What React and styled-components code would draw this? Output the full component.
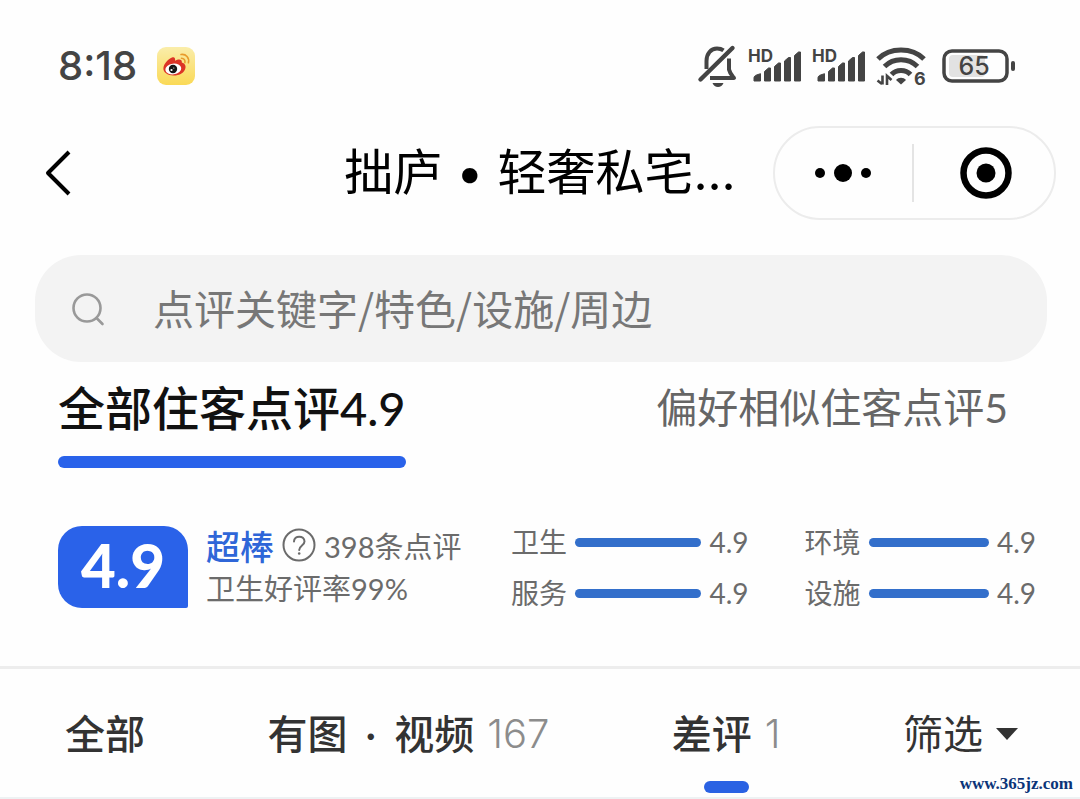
import React from "react";
import styled, { createGlobalStyle } from "styled-components";

const GlobalStyle = createGlobalStyle`
  *, *::before, *::after { box-sizing: border-box; }
  body {
    margin: 0;
    background: #fefefe;
    font-family: Lato, "Noto Sans CJK SC", sans-serif;
    color: #333;
  }
  button, input {
    font: inherit;
    color: inherit;
    border: 0;
    padding: 0;
    margin: 0;
    background: none;
  }
  button { cursor: pointer; }
  svg { display: block; flex: none; }
`;

const Page = styled.main`
  position: relative;
  overflow: hidden;
`;

const StatusBar = styled.div`
  display: flex;
  align-items: center;
  height: 126px;
  padding: 6px 64px 0 58px;
`;

const Clock = styled.time`
  font: 500 40px/48px Inter, sans-serif;
  color: #444;
  margin: 0 auto 0 0;
  display: flex;
  align-items: center;
  gap: 20px;
  height: 48px;
`;

const StatusIcons = styled.div`
  display: flex;
  align-items: center;
  gap: 10px;
`;

const NavBar = styled.header`
  display: grid;
  grid-template-columns: 1fr auto 1fr;
  align-items: center;
  padding: 0 24px 0 44px;
`;

const BackButton = styled.button`
  justify-self: start;
`;

const Title = styled.h1`
  margin: 0 0 0 -20px;
  font: 400 49px/72px Inter, "Noto Sans CJK SC", sans-serif;
  color: #000;
  white-space: nowrap;
`;

const Capsule = styled.div`
  justify-self: end;
  display: flex;
  align-items: center;
  width: 283px;
  height: 94px;
  border: 2px solid #ececec;
  border-radius: 47px;
`;

const CapsuleButton = styled.button`
  flex: 1;
  display: flex;
  justify-content: center;
  align-items: center;
  height: 58px;
  & + & {
    padding-left: 4px;
    border-left: 2px solid #e4e4e4;
  }
`;

const SearchBox = styled.label`
  display: flex;
  align-items: center;
  gap: 48px;
  height: 107px;
  margin: 35px 33px 0 35px;
  padding: 0 36px;
  border-radius: 46px;
  background: #f3f3f3;
`;

const SearchInput = styled.input`
  flex: 1;
  min-width: 0;
  height: 60px;
  margin-bottom: 4px;
  font-family: "Noto Sans CJK SC", sans-serif;
  font-size: 41px;
  outline: 0;
  &::placeholder { color: #777; opacity: 1; }
`;

const ReviewTabs = styled.div`
  display: flex;
  justify-content: space-between;
  align-items: flex-start;
  padding: 10px 72px 0 58px;
`;

const ReviewTab = styled.button`
  font-size: ${(p) => (p.$active ? 47 : 41)}px;
  line-height: 72px;
  font-weight: ${(p) => (p.$active ? 500 : 400)};
  color: ${(p) => (p.$active ? "#111" : "#666")};
  white-space: nowrap;
  &::after {
    content: "";
    display: block;
    height: 12px;
    margin-top: 12px;
    border-radius: 6px;
    background: ${(p) => (p.$active ? "#2962ea" : "transparent")};
  }
`;

const Summary = styled.section`
  display: flex;
  align-items: flex-start;
  height: 201px;
  padding: 58px 44px 0 58px;
  border-bottom: 3px solid #ededed;
`;

const ScoreBadge = styled.strong`
  flex: none;
  width: 130px;
  height: 82px;
  border-radius: 24px 24px 2px 24px;
  background: #2a62e9;
  color: #fff;
  font: 900 60px/78px Lato, sans-serif;
  text-align: center;
`;

const Verdict = styled.div`
  flex: none;
  margin: -2px 0 0 18px;
  width: 305px;
  font-size: 29px;
  color: #6b6b6b;
  white-space: nowrap;
`;

const VerdictLine = styled.div`
  display: flex;
  align-items: center;
  height: 42px;
  gap: 8px;
`;

const Grade = styled.b`
  font-size: 34px;
  font-weight: 500;
  color: #2f66d8;
`;

const Metrics = styled.dl`
  flex: 1;
  display: grid;
  grid-template-columns: 237fr 231fr;
  column-gap: 56px;
  row-gap: 10px;
  margin: -4px 0 0;
  font-size: 28px;
  line-height: 41px;
  color: #6b6b6b;
`;

const Metric = styled.div`
  display: flex;
  align-items: center;
  gap: 8px;
  dt, dd { margin: 0; white-space: nowrap; }
`;

const Track = styled.span`
  flex: 1;
  height: 9px;
  border-radius: 5px;
  background: #336fcb;
`;

const Filters = styled.nav`
  display: flex;
  justify-content: space-between;
  align-items: flex-start;
  height: 130px;
  padding: 18px 62px 0 65px;
  border-bottom: 2px solid #eef2f3;
`;

const FilterButton = styled.button`
  font-size: 40px;
  font-weight: ${(p) => (p.$light ? 400 : 500)};
  white-space: nowrap;
  &::after {
    content: "";
    display: ${(p) => (p.$active ? "block" : "none")};
    width: 45px;
    height: 12px;
    margin: 0 auto;
    border-radius: 6px;
    background: #2a62e3;
  }
`;

const FilterLabel = styled.span`
  display: flex;
  align-items: center;
  gap: 13px;
  height: 94px;
  line-height: 94px;
`;

const MiddleDot = styled.span`
  margin: 0 8px;
`;

const Count = styled.span`
  font-family: Inter, sans-serif;
  font-weight: 300;
  color: #8c8c8c;
`;

const Watermark = styled.span`
  position: absolute;
  right: 7px;
  bottom: 4px;
  font: 700 17px/22px "Liberation Serif", serif;
  color: #0b3478;
`;

const WeiboIcon = () => (
  <svg width="38" height="38" viewBox="0 0 38 38" aria-hidden="true">
    <defs>
      <linearGradient id="weiboTile" x1="0" y1="0" x2="0" y2="1">
        <stop offset="0" stopColor="#faedaa" />
        <stop offset="1" stopColor="#fad956" />
      </linearGradient>
    </defs>
    <rect width="38" height="38" rx="9" fill="url(#weiboTile)" />
    <path d="M15 10.500c2.200-.9 3.600.3 3 3.200 3.300-1.800 7.500-2 6.800 1.800 2.700.7 4.200 2.600 3.700 5.200-.8 5-6 7.800-11.800 7.800-6.500 0-10.500-3.200-10.300-7.200.2-4.300 4.500-9.200 8.600-10.800Z" fill="#dc3426" />
    <ellipse cx="16.300" cy="22" rx="8" ry="5.400" fill="#fff" transform="rotate(-7 16.300 22)" />
    <circle cx="16" cy="22" r="4.200" fill="#161616" />
    <circle cx="14.500" cy="23" r="1.100" fill="#fff" />
    <circle cx="16.800" cy="21" r=".6" fill="#fff" />
    <path d="M24.500 11.300c2.400 0 3.900 1.900 3.400 4.300M24 7.500c5-.8 8.600 3.300 7.400 8.300" fill="none" stroke="#e89b2c" strokeWidth="1.600" strokeLinecap="round" />
  </svg>
);

const MutedBell = () => (
  <svg width="42" height="44" viewBox="0 0 42 44" fill="none" stroke="#444" strokeWidth="4" role="img" aria-label="静音">
    <path d="M10.500 25V17C10.500 9.500 15 4.500 21 4.500c2.600 0 4.700.6 6.500 1.900" />
    <path d="M33 14.500v11c.8 3.800 3 6 5 8.500H14" strokeLinejoin="round" />
    <path d="M4.500 35.500 36.500 4" strokeLinecap="round" strokeWidth="4.400" />
    <path d="M16.500 39h11c-1 2.600-3 4-5.500 4s-4.500-1.400-5.500-4Z" fill="#444" stroke="none" />
  </svg>
);

const Signal = () => (
  <svg width="54" height="44" viewBox="0 0 54 44" fill="#444" role="img" aria-label="HD">
    <text x="0" y="18" fontFamily="Inter, sans-serif" fontSize="17" fontWeight="700">HD</text>
    <path d="M6 37v-3c0-1.500 1-2.500 2.500-3l4-1.300V37ZM16.500 37V27.500l4-3.500h2v13ZM26.500 37V22.500l4-3.500h2v18ZM36.500 37V17l4-3.500h2V37ZM46.500 37V11.500l4-3.500h2v29Z" stroke="#444" strokeWidth="1" strokeLinejoin="round" />
  </svg>
);

const Wifi = () => (
  <svg width="56" height="44" viewBox="0 0 56 44" fill="none" stroke="#444" strokeWidth="5" role="img" aria-label="Wi-Fi 6">
    <path d="M2 15c12-12 34-12 46 0M8.500 22.500c9-9 24-9 33 0M15.500 30.500c5-5.500 14-5.500 19 0" />
    <path d="M20 36c2.500-3 7.500-3 10 0l-5 4.500Z" fill="#444" stroke="none" />
    <path d="M6.500 31.500V40.500M1.500 36.500l4.500 3.500M11 41v-9l4.500 4" strokeWidth="2.600" />
    <text x="38" y="41" fontFamily="Inter, sans-serif" fontSize="18" fontWeight="700" fill="#444" stroke="none">6</text>
  </svg>
);

const Battery = () => (
  <svg width="74" height="34" viewBox="0 0 74 34" role="img" aria-label="65%">
    <rect x="7" y="6" width="36" height="22" rx="4" fill="#e2e2e2" />
    <rect x="2" y="2" width="63" height="30" rx="8" fill="none" stroke="#444" strokeWidth="3.500" />
    <rect x="69" y="12" width="4" height="10" rx="2" fill="#444" />
    <text x="32" y="26" textAnchor="middle" fontFamily="Inter, sans-serif" fontSize="25" fontWeight="500" fill="#444">65</text>
  </svg>
);

const metrics = [
  ["卫生", "4.9"],
  ["环境", "4.9"],
  ["服务", "4.9"],
  ["设施", "4.9"],
];

export default function App() {
  return (
    <Page>
      <GlobalStyle />
      <StatusBar>
        <Clock>
          8:18
          <WeiboIcon />
        </Clock>
        <StatusIcons>
          <MutedBell />
          <Signal />
          <Signal />
          <Wifi />
          <Battery />
        </StatusIcons>
      </StatusBar>

      <NavBar>
        <BackButton aria-label="返回">
          <svg width="28" height="48" viewBox="0 0 28 48" fill="none" stroke="#000" strokeWidth="4">
            <path d="M25 3 4 24l21 21" strokeLinejoin="round" />
          </svg>
        </BackButton>
        <Title>拙庐 • 轻奢私宅...</Title>
        <Capsule>
          <CapsuleButton aria-label="更多">
            <svg width="58" height="20" viewBox="0 0 58 20">
              <circle cx="6" cy="10" r="5" />
              <circle cx="29" cy="10" r="9" />
              <circle cx="52" cy="10" r="5" />
            </svg>
          </CapsuleButton>
          <CapsuleButton aria-label="关闭">
            <svg width="52" height="52" viewBox="0 0 52 52">
              <circle cx="26" cy="26" r="22.500" fill="none" stroke="#000" strokeWidth="6.500" />
              <circle cx="26" cy="26" r="9.500" />
            </svg>
          </CapsuleButton>
        </Capsule>
      </NavBar>

      <SearchBox>
        <svg width="34" height="34" viewBox="0 0 34 34" fill="none" stroke="#999" strokeWidth="2.600" strokeLinecap="round" aria-hidden="true">
          <circle cx="16" cy="16" r="13.500" />
          <path d="m25.500 26 6 6" />
        </svg>
        <SearchInput aria-label="搜索点评" placeholder="点评关键字/特色/设施/周边" />
      </SearchBox>

      <ReviewTabs>
        <ReviewTab $active>全部住客点评4.9</ReviewTab>
        <ReviewTab>偏好相似住客点评5</ReviewTab>
      </ReviewTabs>

      <Summary>
        <ScoreBadge>4.9</ScoreBadge>
        <Verdict>
          <VerdictLine>
            <Grade>超棒</Grade>
            <svg width="34" height="34" viewBox="0 0 34 34" fill="none" stroke="#6b6b6b" strokeWidth="2" aria-hidden="true">
              <circle cx="17" cy="17" r="15.500" />
              <path d="M12 13.500c0-6.500 10.500-6.500 10.500 0 0 4-5.300 4-5.300 8.500" strokeLinecap="round" />
              <circle cx="17.200" cy="25.500" r="1.300" fill="#6b6b6b" stroke="none" />
            </svg>
            <span>398条点评</span>
          </VerdictLine>
          <VerdictLine>卫生好评率99%</VerdictLine>
        </Verdict>
        <Metrics>
          {metrics.map(([label, value]) => (
            <Metric key={label}>
              <dt>{label}</dt>
              <Track />
              <dd>{value}</dd>
            </Metric>
          ))}
        </Metrics>
      </Summary>

      <Filters>
        <FilterButton>
          <FilterLabel>全部</FilterLabel>
        </FilterButton>
        <FilterButton>
          <FilterLabel>
            <span>有图<MiddleDot> · </MiddleDot>视频</span>
            <Count>167</Count>
          </FilterLabel>
        </FilterButton>
        <FilterButton $active>
          <FilterLabel>
            差评<Count>1</Count>
          </FilterLabel>
        </FilterButton>
        <FilterButton $light>
          <FilterLabel>
            筛选
            <svg width="22" height="12" viewBox="0 0 22 12" fill="#333" aria-hidden="true">
              <path d="M0 0h22L11 12Z" />
            </svg>
          </FilterLabel>
        </FilterButton>
      </Filters>
      <Watermark>www.365jz.com</Watermark>
    </Page>
  );
}
